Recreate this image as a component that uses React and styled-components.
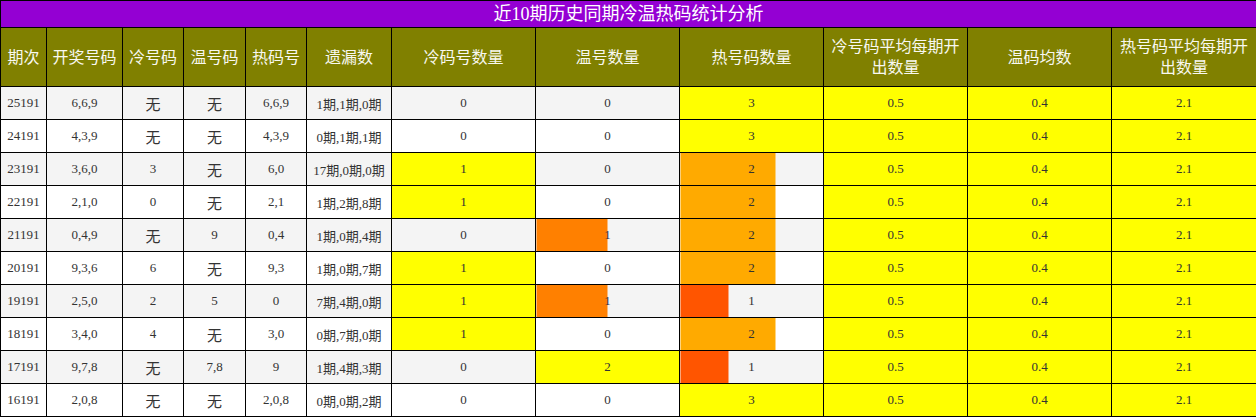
import React from "react";
import styled, { createGlobalStyle } from "styled-components";

const GlobalStyle = createGlobalStyle`
  body {
    margin: 0;
    background: #fff;
    font-family: "Liberation Serif", "Noto Sans CJK SC", serif;
  }
`;

const Table = styled.table`
  width: 1256px;
  border-collapse: collapse;
  table-layout: fixed;
  font-family: "Liberation Serif", "Noto Sans CJK SC", serif;
`;

const TitleCell = styled.th`
  height: 26px;
  padding: 0;
  border: 1px solid #000;
  background: #9400d3;
  color: #fff;
  font-size: 18px;
  font-weight: normal;
  line-height: 26px;
  text-align: center;
`;

const HeadCell = styled.th`
  height: 58px;
  padding: 0 4px;
  border: 1px solid #000;
  background: #808000;
  color: #f8f8f0;
  font-size: 16px;
  font-weight: normal;
  line-height: 21px;
  text-align: center;
`;

const Row = styled.tr`
  background: ${(p) => (p.$odd ? "#f4f4f4" : "#fff")};
`;

const Cell = styled.td`
  height: 32px;
  padding: 0;
  border: 1px solid #000;
  color: #333;
  font-size: 13px;
  text-align: center;
  white-space: nowrap;
  background: ${(p) => (p.$yellow ? "#ffff00" : "transparent")};
`;

const BarCell = styled(Cell)`
  background: ${(p) =>
    p.$fill >= 1
      ? "#ffff00"
      : p.$fill > 0
      ? `linear-gradient(to right, ${p.$color} ${p.$fill * 100}%, transparent ${p.$fill * 100}%)`
      : "transparent"};
`;

const None = styled.span`
  font-family: "Noto Sans CJK SC", sans-serif;
  font-size: 15px;
`;

const widths = [46, 76, 61, 62, 61, 85, 144, 144, 144, 144, 144, 145];

const headers = [
  "期次",
  "开奖号码",
  "冷号码",
  "温号码",
  "热码号",
  "遗漏数",
  "冷码号数量",
  "温号数量",
  "热号码数量",
  "冷号码平均每期开出数量",
  "温码均数",
  "热号码平均每期开出数量",
];

const rows = [
  ["25191", "6,6,9", "无", "无", "6,6,9", "1期,1期,0期", 0, 0, 3],
  ["24191", "4,3,9", "无", "无", "4,3,9", "0期,1期,1期", 0, 0, 3],
  ["23191", "3,6,0", "3", "无", "6,0", "17期,0期,0期", 1, 0, 2],
  ["22191", "2,1,0", "0", "无", "2,1", "1期,2期,8期", 1, 0, 2],
  ["21191", "0,4,9", "无", "9", "0,4", "1期,0期,4期", 0, 1, 2],
  ["20191", "9,3,6", "6", "无", "9,3", "1期,0期,7期", 1, 0, 2],
  ["19191", "2,5,0", "2", "5", "0", "7期,4期,0期", 1, 1, 1],
  ["18191", "3,4,0", "4", "无", "3,0", "0期,7期,0期", 1, 0, 2],
  ["17191", "9,7,8", "无", "7,8", "9", "1期,4期,3期", 0, 2, 1],
  ["16191", "2,0,8", "无", "无", "2,0,8", "0期,0期,2期", 0, 0, 3],
];

const maxOf = (i) => Math.max(...rows.map((r) => r[i]));

const barColor = (fill) => {
  if (fill <= 0.34) return "#ff5500";
  if (fill <= 0.5) return "#ff8000";
  return "#ffaa00";
};

const Text = ({ value }) => (value === "无" ? <None>无</None> : value);

const Count = ({ value, max }) => {
  const fill = max ? value / max : 0;
  return (
    <BarCell $fill={fill} $color={barColor(fill)}>
      {value}
    </BarCell>
  );
};

export default function App() {
  const maxCold = maxOf(6);
  const maxWarm = maxOf(7);
  const maxHot = maxOf(8);

  return (
    <>
      <GlobalStyle />
      <Table>
        <colgroup>
          {widths.map((w, i) => (
            <col key={i} style={{ width: w }} />
          ))}
        </colgroup>
        <thead>
          <tr>
            <TitleCell colSpan={12}>近10期历史同期冷温热码统计分析</TitleCell>
          </tr>
          <tr>
            {headers.map((h) => (
              <HeadCell key={h}>{h}</HeadCell>
            ))}
          </tr>
        </thead>
        <tbody>
          {rows.map((r, i) => (
            <Row key={r[0]} $odd={i % 2 === 0}>
              {r.slice(0, 6).map((v, j) => (
                <Cell key={j}>
                  <Text value={v} />
                </Cell>
              ))}
              <Count value={r[6]} max={maxCold} />
              <Count value={r[7]} max={maxWarm} />
              <Count value={r[8]} max={maxHot} />
              <Cell $yellow>0.5</Cell>
              <Cell $yellow>0.4</Cell>
              <Cell $yellow>2.1</Cell>
            </Row>
          ))}
        </tbody>
      </Table>
    </>
  );
}
